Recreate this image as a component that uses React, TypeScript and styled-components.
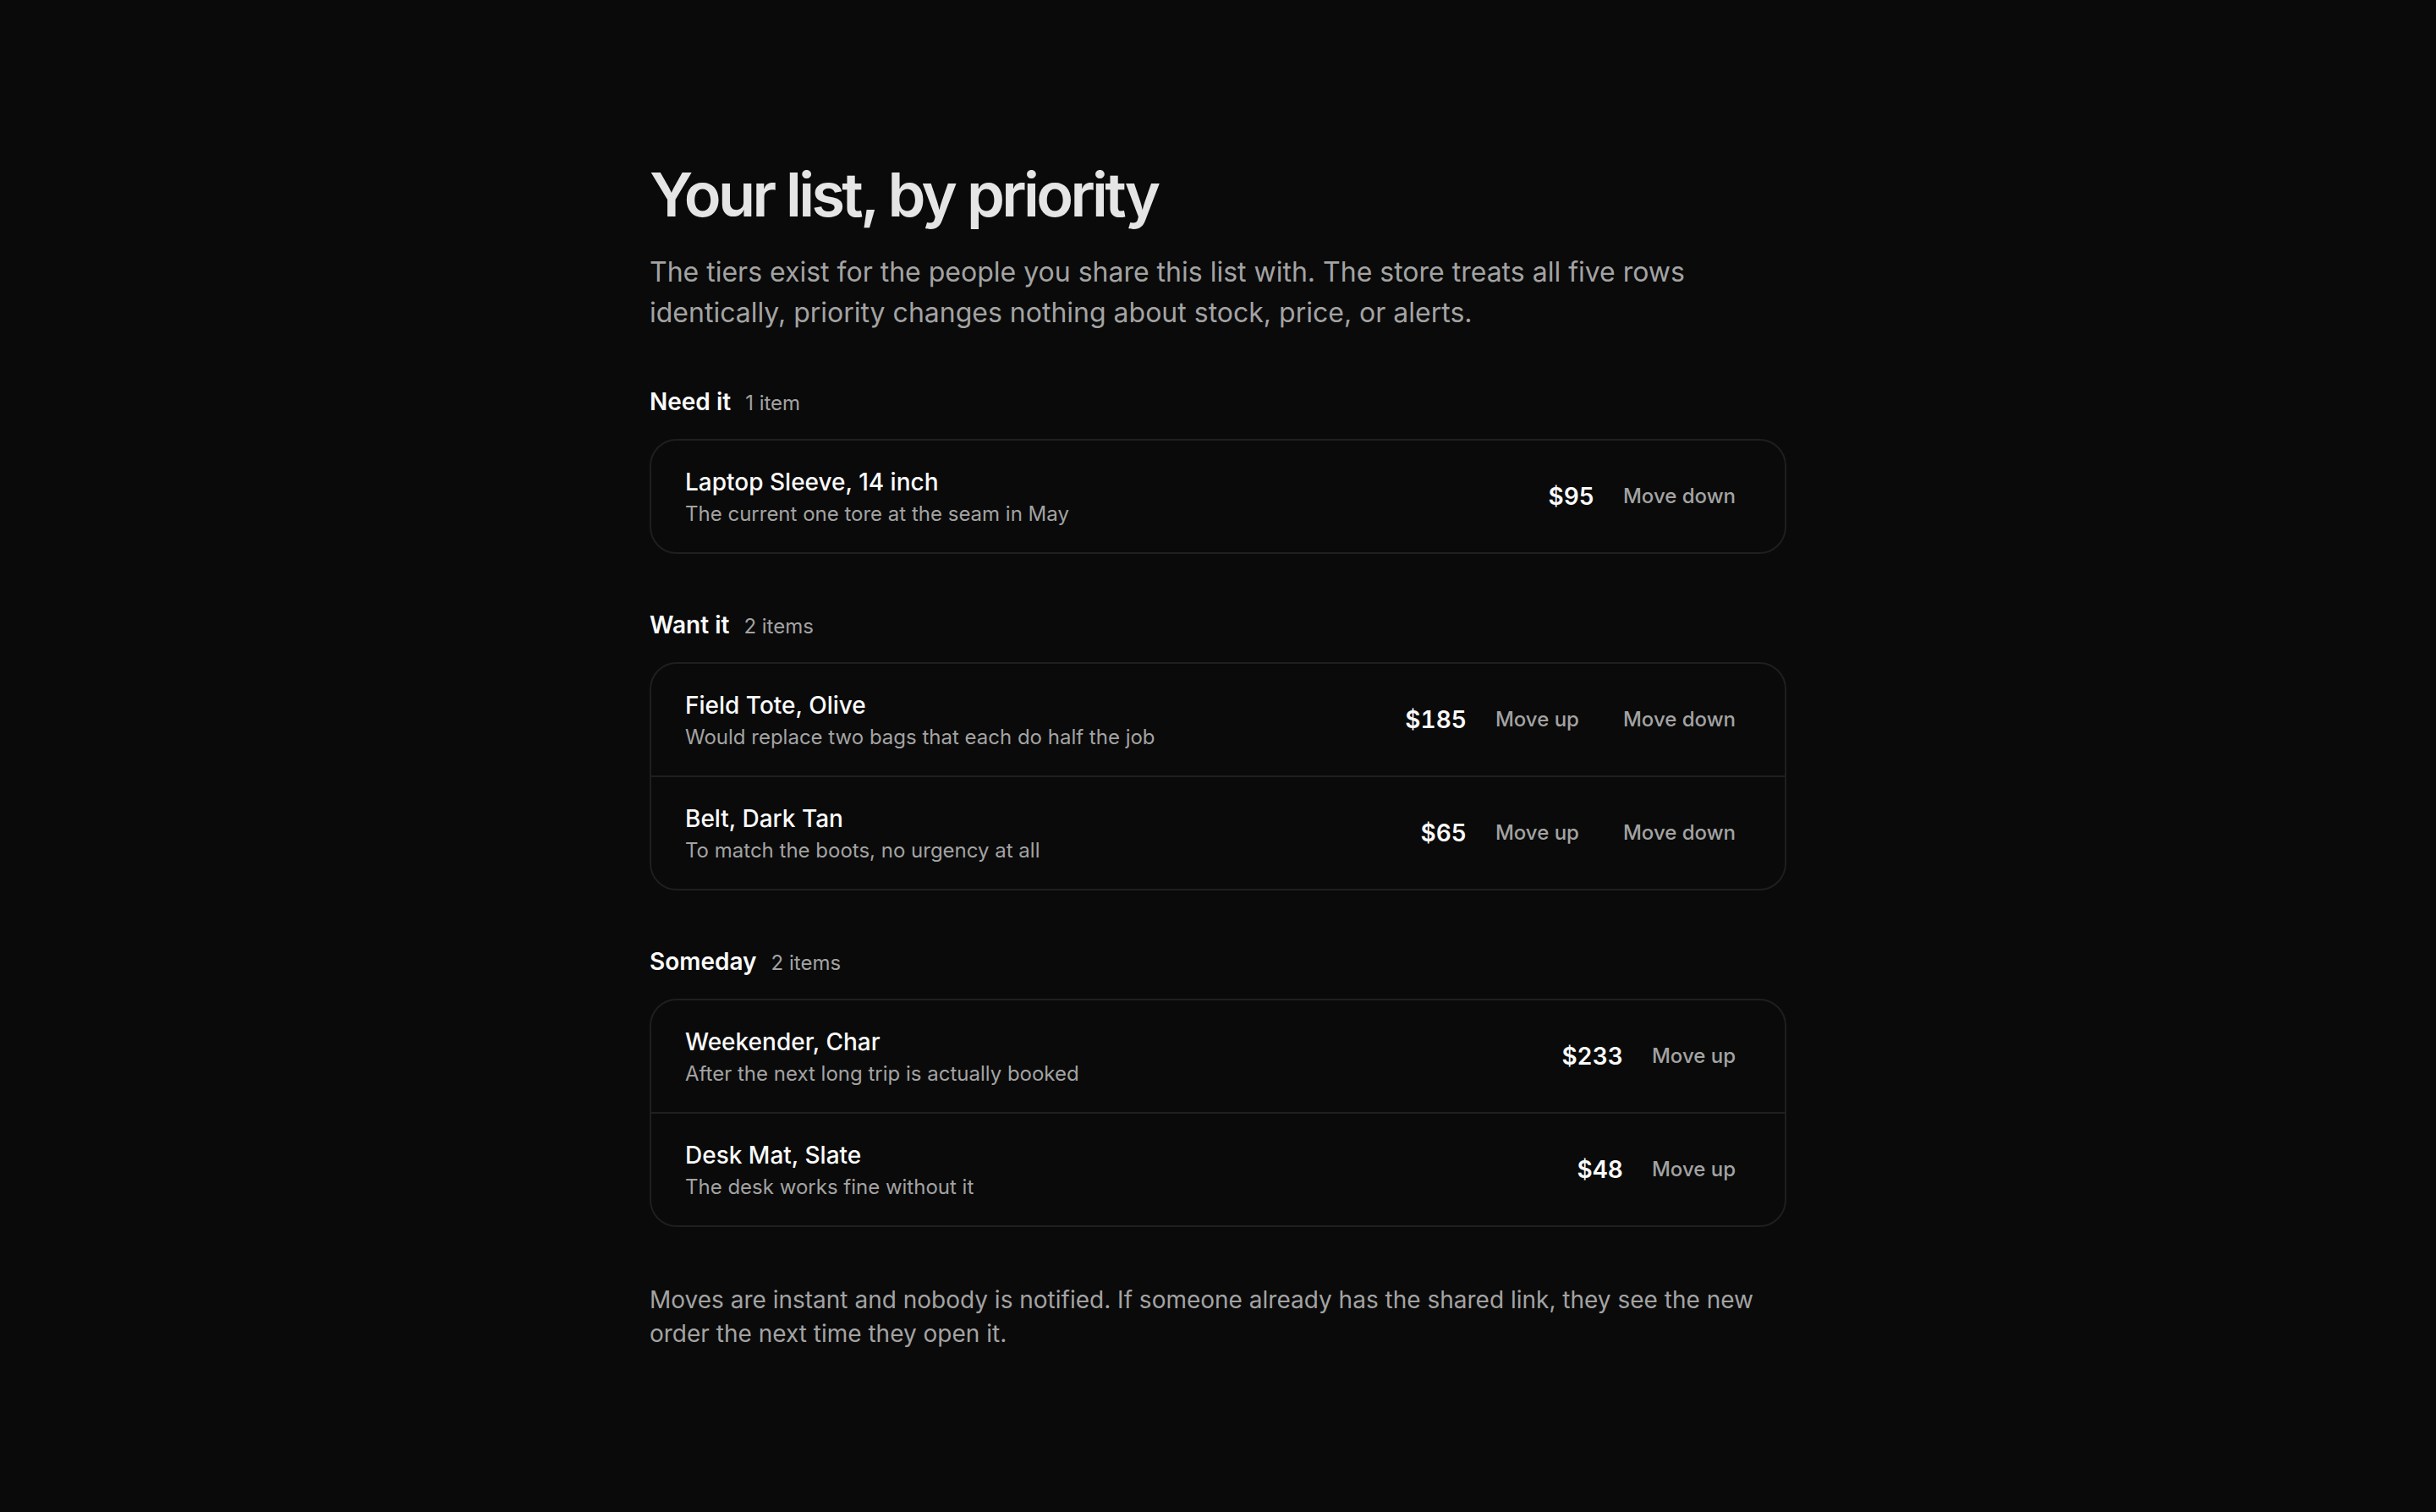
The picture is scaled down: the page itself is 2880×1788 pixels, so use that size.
import React from "react";
import styled, { createGlobalStyle } from "styled-components";

const GlobalStyle = createGlobalStyle`
  html, body {
    margin: 0;
    padding: 0;
    background: #0a0a0a;
  }
  body {
    min-height: 100vh;
    font-family: Inter, "Noto Sans", "Liberation Sans", sans-serif;
    color: #fafafa;
    -webkit-font-smoothing: antialiased;
  }
  * { box-sizing: border-box; }
`;

const Page = styled.main`
  max-width: 1344px;
  margin: 0 auto;
  padding: 190px 0 160px;
`;

const Title = styled.h1`
  margin: 0;
  font-size: 72px;
  line-height: 80px;
  font-weight: 600;
  letter-spacing: -0.05em;
  color: #e5e5e5;
`;

const Lead = styled.p`
  margin: 28px 0 0;
  font-size: 32px;
  line-height: 48px;
  color: #a3a3a3;
`;

const Section = styled.section<{ $first?: boolean }>`
  margin-top: ${(p) => (p.$first ? "61px" : "64px")};
`;

const SectionHead = styled.div`
  display: flex;
  align-items: baseline;
  gap: 17px;
  margin-bottom: 24px;
`;

const SectionName = styled.h2`
  margin: 0;
  font-size: 28px;
  line-height: 40px;
  font-weight: 600;
  color: #fafafa;
`;

const Count = styled.span`
  font-size: 24px;
  line-height: 32px;
  color: #a3a3a3;
`;

const Card = styled.ul`
  list-style: none;
  margin: 0;
  padding: 0;
  border: 2px solid #1f1f1f;
  border-radius: 32px;
  overflow: hidden;
`;

const Row = styled.li`
  display: flex;
  align-items: center;
  justify-content: space-between;
  gap: 32px;
  padding: 29px 40px;
  & + & {
    border-top: 2px solid #1f1f1f;
  }
`;

const Info = styled.div`
  display: flex;
  flex-direction: column;
  gap: 2px;
  min-width: 0;
`;

const Name = styled.span`
  font-size: 28px;
  line-height: 40px;
  font-weight: 500;
  color: #fafafa;
`;

const Note = styled.span`
  font-size: 24px;
  line-height: 32px;
  color: #a3a3a3;
`;

const Actions = styled.div`
  display: flex;
  align-items: center;
  gap: 16px;
`;

const Price = styled.span`
  font-size: 28px;
  line-height: 40px;
  font-weight: 600;
  font-variant-numeric: tabular-nums;
  color: #fafafa;
`;

const MoveButton = styled.button`
  appearance: none;
  background: transparent;
  border: 0;
  padding: 8px 18px;
  border-radius: 12px;
  font-family: inherit;
  font-size: 24px;
  line-height: 32px;
  font-weight: 500;
  color: #a3a3a3;
  cursor: pointer;
  &:hover {
    color: #fafafa;
  }
`;

const Footnote = styled.p`
  margin: 66px 0 0;
  font-size: 28px;
  line-height: 40px;
  color: #a3a3a3;
`;

type Item = { name: string; note: string; price: number };
type Tier = { name: string; items: Item[] };

const tiers: Tier[] = [
  {
    name: "Need it",
    items: [
      { name: "Laptop Sleeve, 14 inch", note: "The current one tore at the seam in May", price: 95 },
    ],
  },
  {
    name: "Want it",
    items: [
      { name: "Field Tote, Olive", note: "Would replace two bags that each do half the job", price: 185 },
      { name: "Belt, Dark Tan", note: "To match the boots, no urgency at all", price: 65 },
    ],
  },
  {
    name: "Someday",
    items: [
      { name: "Weekender, Char", note: "After the next long trip is actually booked", price: 233 },
      { name: "Desk Mat, Slate", note: "The desk works fine without it", price: 48 },
    ],
  },
];

export default function App() {
  return (
    <>
      <GlobalStyle />
      <Page>
        <Title>Your list, by priority</Title>
        <Lead>
          The tiers exist for the people you share this list with. The store treats all five rows
          identically, priority changes nothing about stock, price, or alerts.
        </Lead>
        {tiers.map((tier, ti) => (
          <Section key={tier.name} $first={ti === 0}>
            <SectionHead>
              <SectionName>{tier.name}</SectionName>
              <Count>
                {tier.items.length} {tier.items.length === 1 ? "item" : "items"}
              </Count>
            </SectionHead>
            <Card>
              {tier.items.map((item) => (
                <Row key={item.name}>
                  <Info>
                    <Name>{item.name}</Name>
                    <Note>{item.note}</Note>
                  </Info>
                  <Actions>
                    <Price>${item.price}</Price>
                    {ti > 0 && <MoveButton type="button">Move up</MoveButton>}
                    {ti < tiers.length - 1 && <MoveButton type="button">Move down</MoveButton>}
                  </Actions>
                </Row>
              ))}
            </Card>
          </Section>
        ))}
        <Footnote>
          Moves are instant and nobody is notified. If someone already has the shared link, they see
          the new order the next time they open it.
        </Footnote>
      </Page>
    </>
  );
}
